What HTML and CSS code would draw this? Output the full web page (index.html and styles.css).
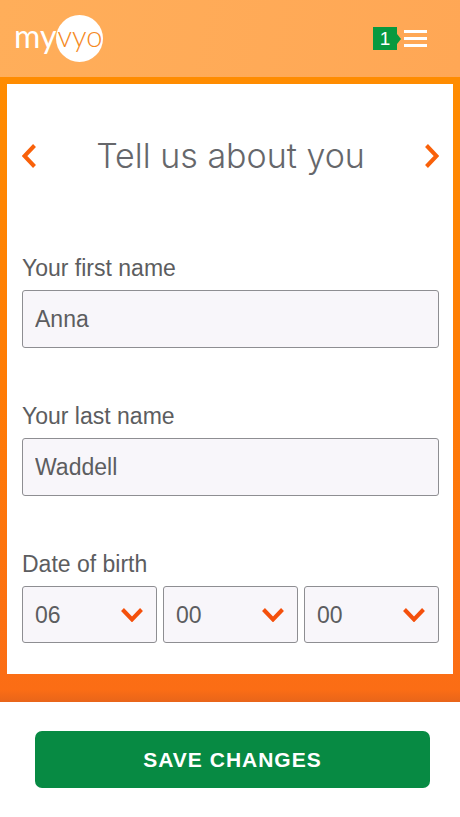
FILE: index.html
```html
<!DOCTYPE html>
<html lang="en">
<head>
<meta charset="utf-8">
<meta name="viewport" content="width=device-width, initial-scale=1">
<title>myvyo – Tell us about you</title>
<link rel="stylesheet" href="styles.css">
</head>
<body>
<header class="header">
  <a class="logo" href="#"><span class="logo-my">my</span><span class="logo-vyo">vyo</span></a>
  <button class="menu" type="button" aria-label="Menu, 1 notification">
    <span class="badge">1</span>
    <svg class="bars" viewBox="0 0 23 17" width="23" height="17" aria-hidden="true"><path d="M0 0h23v3H0zM0 7h23v3H0zM0 14h23v3H0z" fill="#fff"/></svg>
  </button>
</header>
<form class="form">
  <main class="main">
    <section class="card">
      <div class="title-row">
        <button class="nav" type="button" aria-label="Previous"><svg viewBox="0 0 14 24" width="14" height="24" aria-hidden="true"><path d="M12.500 1.500 2.500 12l10 10.500"/></svg></button>
        <h1 class="title">Tell us about you</h1>
        <button class="nav" type="button" aria-label="Next"><svg viewBox="0 0 14 24" width="14" height="24" aria-hidden="true"><path d="M1.500 1.500 11.500 12l-10 10.500"/></svg></button>
      </div>
      <div class="field">
        <label class="label" for="first">Your first name</label>
        <input class="control" id="first" type="text" value="Anna">
      </div>
      <div class="field">
        <label class="label" for="last">Your last name</label>
        <input class="control" id="last" type="text" value="Waddell">
      </div>
      <div class="field" role="group" aria-labelledby="dob">
        <label class="label" id="dob" for="day">Date of birth</label>
        <div class="dates">
          <div class="pick">
            <select class="control" id="day" aria-label="Day"><option>06</option></select>
            <svg class="chevron" viewBox="0 0 22 14" width="22" height="14" aria-hidden="true"><path d="M1.500 1.500 11 11.500l9.500-10"/></svg>
          </div>
          <div class="pick">
            <select class="control" aria-label="Month"><option>00</option></select>
            <svg class="chevron" viewBox="0 0 22 14" width="22" height="14" aria-hidden="true"><path d="M1.500 1.500 11 11.500l9.500-10"/></svg>
          </div>
          <div class="pick">
            <select class="control" aria-label="Year"><option>00</option></select>
            <svg class="chevron" viewBox="0 0 22 14" width="22" height="14" aria-hidden="true"><path d="M1.500 1.500 11 11.500l9.500-10"/></svg>
          </div>
        </div>
      </div>
    </section>
  </main>
  <footer class="footer">
    <button class="save" type="submit">SAVE CHANGES</button>
  </footer>
</form>
</body>
</html>
```
FILE: styles.css
```css
* { box-sizing: border-box; }

body {
  margin: 0;
  background: #fff;
  color: #5c5d60;
  font-family: "Liberation Sans", Arial, sans-serif;
}

button {
  border: 0;
  padding: 0;
  background: none;
  font-family: inherit;
  cursor: pointer;
}

.header {
  display: flex;
  align-items: center;
  justify-content: space-between;
  padding: 15px 33px 15px 14px;
  background: linear-gradient(100deg, #ffae5a, #ffa755);
}

.logo {
  display: flex;
  align-items: flex-start;
  color: #fff;
  font: 400 32px/42px Lato, sans-serif;
  text-decoration: none;
}

.logo-vyo {
  width: 47px;
  height: 47px;
  border-radius: 50%;
  background: #fff;
  color: #f58a1f;
  font-size: 29px;
  font-weight: 300;
  text-align: center;
}

.menu {
  display: flex;
  align-items: center;
  gap: 7px;
}

.badge {
  position: relative;
  width: 24px;
  background: #07993f;
  color: #fff;
  font-size: 19px;
  line-height: 23px;
}

.badge::after {
  content: "";
  position: absolute;
  left: 100%;
  top: 7px;
  border: solid transparent;
  border-width: 5px 0 5px 4px;
  border-left-color: #07993f;
}

.main {
  padding: 7px 7px 28px;
  background: linear-gradient(#ff8c00, #ff7b05 50%, #fb6d15 98%, #e8651a);
}

.card {
  padding: 48px 14px 31px 15px;
  background: #fff;
}

.title-row {
  display: flex;
  align-items: center;
  justify-content: space-between;
  padding-bottom: 20px;
}

.title {
  margin: 0;
  color: #66676b;
  font: 300 34px/48px Inter, sans-serif;
}

.nav svg {
  display: block;
  fill: none;
  stroke: #f9610a;
  stroke-width: 4;
}

.field { padding-top: 54px; }

.label {
  display: block;
  margin-bottom: 8px;
  font-size: 23px;
  line-height: 28px;
}

.control {
  display: block;
  width: 100%;
  height: 58px;
  padding: 0 12px;
  border: 1px solid #8e8e92;
  border-radius: 3px;
  background: #f8f6fa;
  color: #5c5d60;
  font: 23px "Liberation Sans", Arial, sans-serif;
  appearance: none;
}

.dates {
  display: grid;
  grid-template-columns: repeat(3, 1fr);
  gap: 6px;
}

.pick { position: relative; }

.pick .control { height: 57px; }

.chevron {
  position: absolute;
  right: 14px;
  top: 22px;
  fill: none;
  stroke: #f4500c;
  stroke-width: 4;
  pointer-events: none;
}

.footer { padding: 29px 30px 29px 35px; }

.save {
  display: block;
  width: 100%;
  border-radius: 7px;
  background: #078a43;
  color: #fff;
  font-size: 21px;
  font-weight: 700;
  line-height: 57px;
  letter-spacing: 1px;
}
```
